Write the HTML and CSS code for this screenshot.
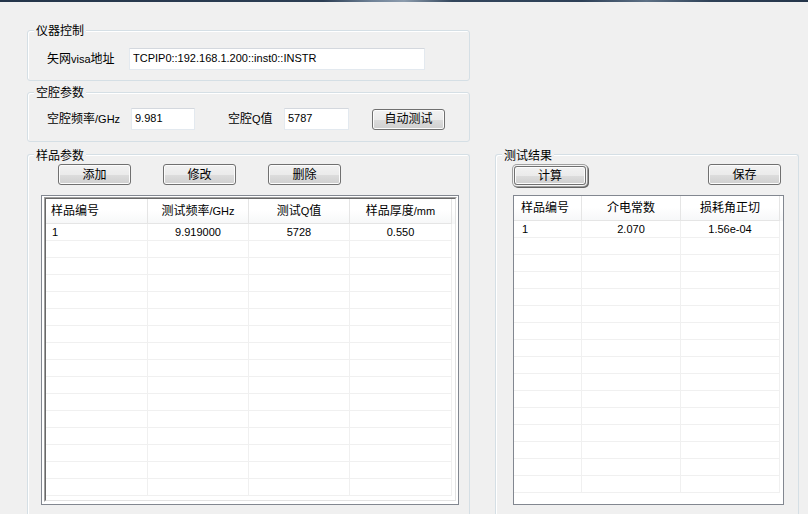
FILE: index.html
```html
<!DOCTYPE html>
<html lang="zh-CN">
<head>
<meta charset="utf-8">
<title>介电常数测试</title>
<link rel="stylesheet" href="styles.css">
</head>
<body>
<div class="topbar"></div>
<main class="window">
  <section class="group g-inst">
    <div class="gtitle">仪器控制</div>
    <div class="frow">
      <label class="lbl w-visa">矢网<span class="lat">visa</span>地址</label>
      <input class="edit w-visa-in" value="TCPIP0::192.168.1.200::inst0::INSTR" readonly>
    </div>
  </section>

  <section class="group g-cav">
    <div class="gtitle">空腔参数</div>
    <div class="frow">
      <label class="lbl w-freq">空腔频率<span class="lat">/GHz</span></label>
      <input class="edit w-freq-in" value="9.981" readonly>
      <label class="lbl w-q">空腔<span class="lat">Q</span>值</label>
      <input class="edit w-q-in" value="5787" readonly>
      <button class="btn btn-auto">自动测试</button>
    </div>
  </section>

  <section class="group g-sample">
    <div class="gtitle">样品参数</div>
    <div class="btnrow left">
      <button class="btn">添加</button>
      <button class="btn">修改</button>
      <button class="btn">删除</button>
    </div>
    <div class="tframe sunken">
      <div class="s1"><div class="s2">
        <div class="trow head cols4">
          <div class="c first">样品编号</div>
          <div class="c">测试频率<span class="lat">/GHz</span></div>
          <div class="c">测试<span class="lat">Q</span>值</div>
          <div class="c">样品厚度<span class="lat">/mm</span></div>
        </div>
        <div class="trow cols4">
          <div class="c first num">1</div>
          <div class="c num">9.919000</div>
          <div class="c num">5728</div>
          <div class="c num">0.550</div>
        </div>
        <div class="trow cols4"><div class="c"></div><div class="c"></div><div class="c"></div><div class="c"></div></div>
        <div class="trow cols4"><div class="c"></div><div class="c"></div><div class="c"></div><div class="c"></div></div>
        <div class="trow cols4"><div class="c"></div><div class="c"></div><div class="c"></div><div class="c"></div></div>
        <div class="trow cols4"><div class="c"></div><div class="c"></div><div class="c"></div><div class="c"></div></div>
        <div class="trow cols4"><div class="c"></div><div class="c"></div><div class="c"></div><div class="c"></div></div>
        <div class="trow cols4"><div class="c"></div><div class="c"></div><div class="c"></div><div class="c"></div></div>
        <div class="trow cols4"><div class="c"></div><div class="c"></div><div class="c"></div><div class="c"></div></div>
        <div class="trow cols4"><div class="c"></div><div class="c"></div><div class="c"></div><div class="c"></div></div>
        <div class="trow cols4"><div class="c"></div><div class="c"></div><div class="c"></div><div class="c"></div></div>
        <div class="trow cols4"><div class="c"></div><div class="c"></div><div class="c"></div><div class="c"></div></div>
        <div class="trow cols4"><div class="c"></div><div class="c"></div><div class="c"></div><div class="c"></div></div>
        <div class="trow cols4"><div class="c"></div><div class="c"></div><div class="c"></div><div class="c"></div></div>
        <div class="trow cols4"><div class="c"></div><div class="c"></div><div class="c"></div><div class="c"></div></div>
        <div class="trow cols4"><div class="c"></div><div class="c"></div><div class="c"></div><div class="c"></div></div>
        <div class="trow cols4"><div class="c"></div><div class="c"></div><div class="c"></div><div class="c"></div></div>
      </div></div>
    </div>
  </section>

  <section class="group g-result">
    <div class="gtitle">测试结果</div>
    <div class="btnrow split">
      <button class="btn btn-default">计算</button>
      <button class="btn">保存</button>
    </div>
    <div class="tframe plain">
      <div class="trow head cols3">
        <div class="c first">样品编号</div>
        <div class="c">介电常数</div>
        <div class="c">损耗角正切</div>
      </div>
      <div class="trow cols3">
        <div class="c first num">1</div>
        <div class="c num">2.070</div>
        <div class="c num">1.56e-04</div>
      </div>
      <div class="trow cols3"><div class="c"></div><div class="c"></div><div class="c"></div></div>
      <div class="trow cols3"><div class="c"></div><div class="c"></div><div class="c"></div></div>
      <div class="trow cols3"><div class="c"></div><div class="c"></div><div class="c"></div></div>
      <div class="trow cols3"><div class="c"></div><div class="c"></div><div class="c"></div></div>
      <div class="trow cols3"><div class="c"></div><div class="c"></div><div class="c"></div></div>
      <div class="trow cols3"><div class="c"></div><div class="c"></div><div class="c"></div></div>
      <div class="trow cols3"><div class="c"></div><div class="c"></div><div class="c"></div></div>
      <div class="trow cols3"><div class="c"></div><div class="c"></div><div class="c"></div></div>
      <div class="trow cols3"><div class="c"></div><div class="c"></div><div class="c"></div></div>
      <div class="trow cols3"><div class="c"></div><div class="c"></div><div class="c"></div></div>
      <div class="trow cols3"><div class="c"></div><div class="c"></div><div class="c"></div></div>
      <div class="trow cols3"><div class="c"></div><div class="c"></div><div class="c"></div></div>
      <div class="trow cols3"><div class="c"></div><div class="c"></div><div class="c"></div></div>
      <div class="trow cols3"><div class="c"></div><div class="c"></div><div class="c"></div></div>
      <div class="trow cols3"><div class="c"></div><div class="c"></div><div class="c"></div></div>
    </div>
  </section>
</main>
</body>
</html>
```

FILE: styles.css
```css
html, body {
  margin: 0;
  padding: 0;
}

body {
  width: 808px;
  height: 514px;
  overflow: hidden;
  background: #f0f0f0;
  font-family: "Liberation Sans", "Noto Sans CJK SC", sans-serif;
  font-size: 12px;
  line-height: 14px;
  color: #000;
}

.topbar {
  height: 2px;
  background: linear-gradient(90deg, #24354a 0%, #2c3e54 40%, #6f8297 46%, #8c9cad 50%, #33465c 56%, #2d4057 72%, #5d7085 80%, #2e4157 88%, #24354a 100%);
}

.window {
  box-sizing: border-box;
  height: 512px;
  padding: 28px 0 0 27px;
  display: grid;
  grid-template-columns: 443px 304px;
  grid-template-rows: 51px 50px 360px;
  column-gap: 25px;
  row-gap: 11px;
  overflow: hidden;
}

/* group boxes */
.group {
  box-sizing: border-box;
  border: 1px solid #d5dfe5;
  border-radius: 3px;
  box-shadow: inset 1px 1px 0 #fff;
}

.g-inst { grid-column: 1; grid-row: 1; }
.g-cav { grid-column: 1; grid-row: 2; }

.g-sample,
.g-result {
  grid-row: 3;
  margin-top: 1px;
  height: 360px;
  border-bottom: none;
  border-radius: 3px 3px 0 0;
  overflow: hidden;
}

.g-sample { grid-column: 1; }
.g-result { grid-column: 2; }

.gtitle {
  width: max-content;
  height: 14px;
  margin: -7px 0 0 6px;
  padding: 0 2px;
  background: #f0f0f0;
  line-height: 14px;
}

.g-sample .gtitle,
.g-result .gtitle {
  margin-top: -6px;
}

.g-sample,
.g-result {
  overflow: visible;
}

.lat {
  font-family: "Liberation Sans", sans-serif;
  font-size: 11px;
}

/* form rows */
.frow {
  display: flex;
  align-items: center;
  height: 22px;
}

.g-inst .frow { margin-top: 10px; }
.g-cav .frow { margin-top: 8px; }

.lbl {
  box-sizing: border-box;
  flex: none;
  white-space: nowrap;
}

.w-visa { width: 101px; padding-left: 19px; }
.w-freq { width: 103px; padding-left: 19px; }
.w-q { width: 56px; margin-left: 33px; }

.edit {
  box-sizing: border-box;
  flex: none;
  height: 22px;
  margin: 0;
  padding: 0 3px 3px 3px;
  border: 1px solid #e3e9ef;
  border-top-color: #d4d8de;
  background: #fff;
  font-family: "Liberation Sans", sans-serif;
  font-size: 11px;
  color: #000;
  outline: none;
}

.w-visa-in { width: 296px; }
.w-freq-in { width: 64px; }
.w-q-in { width: 65px; }

/* buttons */
.btn {
  box-sizing: border-box;
  flex: none;
  width: 73px;
  height: 21px;
  margin: 0;
  padding: 0;
  border: 1px solid #707070;
  border-radius: 3px;
  background: linear-gradient(#f2f2f2 0%, #ebebeb 50%, #dddddd 51%, #cfcfcf 100%);
  box-shadow: inset 0 0 0 1px #fcfcfc;
  font-family: "Liberation Sans", "Noto Sans CJK SC", sans-serif;
  font-size: 12px;
  line-height: 18px;
  color: #000;
}

.btn-auto { margin-left: 23px; }

.btn-default {
  width: 72px;
  height: 19px;
  margin: 2px 0 0 2px;
  line-height: 16px;
  box-shadow: inset 0 0 0 1px #fcfcfc, 0 0 0 1px #f4f4f4, 0 0 0 2px #a0a0a0, 1px 1px 0 2px #646464;
}

.btnrow {
  display: flex;
  align-items: flex-start;
  height: 21px;
  margin-top: 1px;
}

.btnrow.left {
  gap: 32px;
  padding-left: 30px;
}

.btnrow.split {
  justify-content: space-between;
  padding: 0 17px 0 16px;
}

/* tables */
.tframe {
  box-sizing: border-box;
  height: 310px;
  margin-top: 10px;
  border: 1px solid #828790;
  background: #fff;
  overflow: hidden;
}

.tframe.sunken {
  width: 418px;
  margin-left: 13px;
  padding: 1px 1px 2px 2px;
}

.s1 {
  box-sizing: border-box;
  height: 100%;
  border: 1px solid;
  border-color: #a0a0a0 #fff #fff #a0a0a0;
}

.s2 {
  box-sizing: border-box;
  height: 100%;
  border: 1px solid;
  border-color: #696969 #e3e3e3 #e3e3e3 #696969;
  overflow: hidden;
}

.tframe.plain {
  width: 271px;
  margin-left: 17px;
}

.trow {
  display: grid;
  height: 17px;
}

.cols4 { grid-template-columns: 102px 101px 101px 102px; }
.cols3 { grid-template-columns: 68px 99px 99px; }

.c {
  box-sizing: border-box;
  border-right: 1px solid #f0f0f0;
  border-bottom: 1px solid #f0f0f0;
  text-align: center;
  line-height: 16px;
  white-space: nowrap;
  overflow: hidden;
}

.c.first { text-align: left; padding-left: 6px; }

.num {
  font-family: "Liberation Sans", sans-serif;
  font-size: 11px;
}

.trow.head {
  height: 25px;
  background: linear-gradient(#ffffff 0%, #ffffff 45%, #f6f7f8 100%);
}

.head .c {
  border-right-color: #e5e5e5;
  border-bottom-color: #e5e5e5;
  line-height: 24px;
}

.head .c.first { padding-left: 5px; }

.plain .c.first { padding-left: 7px; }
.plain .c.first.num { padding-left: 8px; }
```
